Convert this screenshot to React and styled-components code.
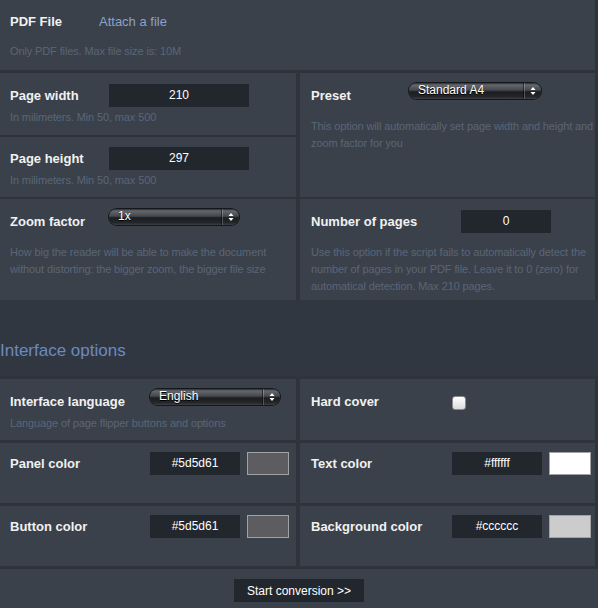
import styled, { createGlobalStyle } from "styled-components";

const GlobalStyle = createGlobalStyle`
  body {
    margin: 0;
    background: #2f343c;
    font-family: "Liberation Sans", Arial, sans-serif;
  }
`;

const Page = styled.div`
  width: 598px;
  height: 608px;
  overflow: hidden;
  display: flex;
  flex-direction: column;
`;

const Grid = styled.div`
  display: grid;
  grid-template-columns: 296px 295px;
  grid-template-rows: ${(p) => p.$rows};
  column-gap: 4px;
  row-gap: ${(p) => p.$rowGap}px;
  margin-right: 3px;
`;

const Panel = styled.div`
  background: #3a414b;
  padding: ${(p) => p.$pt ?? 11}px 0 0 ${(p) => p.$pl ?? 10}px;
  grid-column: ${(p) => p.$col || "auto"};
  grid-row: ${(p) => p.$span || "auto"};
  box-sizing: border-box;
`;

const TopPanel = styled(Panel)`
  height: 70px;
  margin: 0 3px 3px 0;
`;

const Row = styled.div`
  display: flex;
  align-items: center;
  height: 23px;
`;

const Label = styled.span`
  width: ${(p) => p.$w}px;
  flex-shrink: 0;
  color: #f1f1f1;
  font-size: 13px;
  font-weight: bold;
`;

const Link = styled.a`
  color: #8ba3c7;
  font-size: 13px;
  text-decoration: none;
  cursor: pointer;
`;

const Hint = styled.div`
  margin-top: ${(p) => p.$gap}px;
  color: #5a6577;
  font-size: 11px;
  line-height: 17px;
  letter-spacing: -0.12px;
  white-space: nowrap;
`;

const Field = styled.div`
  width: ${(p) => p.$w}px;
  height: 23px;
  background: #22272e;
  color: #fff;
  font-size: 12px;
  line-height: 23px;
  text-align: center;
`;

const Swatch = styled.div`
  width: 40px;
  height: 21px;
  margin-left: 7px;
  border: 1px solid #a2a2a2;
  background: ${(p) => p.$color};
`;

const Select = styled.div`
  display: flex;
  align-self: flex-start;
  margin-top: -1px;
  width: ${(p) => p.$w}px;
  height: 16px;
  border-radius: 8px;
  background: linear-gradient(#2a2c30 0%, #64686e 12%, #44474c 45%, #1b1d20 55%, #24262a 85%, #3c3f44 100%);
  box-shadow: 0 0 0 1px #15171a;
  color: #fff;
  font-size: 12px;
  line-height: 15px;
  text-shadow: 0 1px 0 #000;
  overflow: hidden;
`;

const SelectText = styled.span`
  flex: 1;
  padding-left: 9px;
`;

const SelectArrows = styled.span`
  width: 16px;
  display: flex;
  align-items: center;
  justify-content: center;
  border-left: 1px solid rgba(255, 255, 255, 0.22);
  box-shadow: -1px 0 0 rgba(0, 0, 0, 0.5);
`;

const Checkbox = styled.div`
  width: 12px;
  height: 12px;
  border-radius: 3px;
  border: 1px solid #8a8a8a;
  background: linear-gradient(#ffffff, #dcdcdc);
  margin-top: 2px;
`;

const SectionHead = styled.div`
  height: 76px;
  margin-bottom: 3px;
  padding-top: 41px;
  box-sizing: border-box;
  background: #313740;
`;

const Heading = styled.h2`
  margin: 0;
  font-size: 17px;
  font-weight: normal;
  line-height: 20px;
  color: #6a8ac2;
`;

const BottomBar = styled.div`
  margin-top: 3px;
  flex: 1;
  background: #3a414b;
  display: flex;
  justify-content: center;
  padding-top: 10px;
  box-sizing: border-box;
`;

const Button = styled.button`
  width: 130px;
  height: 23px;
  border: none;
  background: #22272e;
  color: #fff;
  font-family: "Liberation Sans", Arial, sans-serif;
  font-size: 12px;
  cursor: pointer;
`;

function Dropdown({ width, value }) {
  return (
    <Select $w={width}>
      <SelectText>{value}</SelectText>
      <SelectArrows>
        <svg width="6" height="10" viewBox="0 0 6 10">
          <path d="M3 1 L5.5 4 H0.5 Z" fill="#fff" />
          <path d="M3 9 L5.5 6 H0.5 Z" fill="#fff" />
        </svg>
      </SelectArrows>
    </Select>
  );
}

function ColorPanel({ label, value, color, pl, w }) {
  return (
    <Panel $pt={9} $pl={pl}>
      <Row>
        <Label $w={w}>{label}</Label>
        <Field $w={90}>{value}</Field>
        <Swatch $color={color} />
      </Row>
    </Panel>
  );
}

export default function App() {
  return (
    <Page>
      <GlobalStyle />
      <TopPanel $pt={10}>
        <Row>
          <Label $w={89}>PDF File</Label>
          <Link>Attach a file</Link>
        </Row>
        <Hint $gap={10}>Only PDF files. Max file size is: 10M</Hint>
      </TopPanel>

      <Grid $rows="62px 60px 101px" $rowGap={2}>
        <Panel>
          <Row>
            <Label $w={99}>Page width</Label>
            <Field $w={140}>210</Field>
          </Row>
          <Hint $gap={2}>In milimeters. Min 50, max 500</Hint>
        </Panel>
        <Panel $col="2" $span="1 / span 2" $pl={11}>
          <Row>
            <Label $w={98}>Preset</Label>
            <Dropdown width={132} value="Standard A4" />
          </Row>
          <Hint $gap={11}>
            This option will automatically set page width and height and
            <br />
            zoom factor for you
          </Hint>
        </Panel>
        <Panel $pt={10}>
          <Row>
            <Label $w={99}>Page height</Label>
            <Field $w={140}>297</Field>
          </Row>
          <Hint $gap={2}>In milimeters. Min 50, max 500</Hint>
        </Panel>
        <Panel>
          <Row>
            <Label $w={99}>Zoom factor</Label>
            <Dropdown width={130} value="1x" />
          </Row>
          <Hint $gap={11}>
            How big the reader will be able to make the document
            <br />
            without distorting: the bigger zoom, the bigger file size
          </Hint>
        </Panel>
        <Panel $pl={11}>
          <Row>
            <Label $w={150}>Number of pages</Label>
            <Field $w={90}>0</Field>
          </Row>
          <Hint $gap={11}>
            Use this option if the script fails to automatically detect the
            <br />
            number of pages in your PDF file. Leave it to 0 (zero) for
            <br />
            automatical detection. Max 210 pages.
          </Hint>
        </Panel>
      </Grid>

      <SectionHead>
        <Heading>Interface options</Heading>
      </SectionHead>

      <Grid $rows="61px 60px 60px" $rowGap={3}>
        <Panel>
          <Row>
            <Label $w={140}>Interface language</Label>
            <Dropdown width={130} value="English" />
          </Row>
          <Hint $gap={2}>Language of page flipper buttons and options</Hint>
        </Panel>
        <Panel $pl={11}>
          <Row>
            <Label $w={141}>Hard cover</Label>
            <Checkbox />
          </Row>
        </Panel>
        <ColorPanel label="Panel color" value="#5d5d61" color="#5d5d61" pl={10} w={140} />
        <ColorPanel label="Text color" value="#ffffff" color="#ffffff" pl={11} w={141} />
        <ColorPanel label="Button color" value="#5d5d61" color="#5d5d61" pl={10} w={140} />
        <ColorPanel label="Background color" value="#cccccc" color="#cccccc" pl={11} w={141} />
      </Grid>

      <BottomBar>
        <Button>Start conversion &gt;&gt;</Button>
      </BottomBar>
    </Page>
  );
}
